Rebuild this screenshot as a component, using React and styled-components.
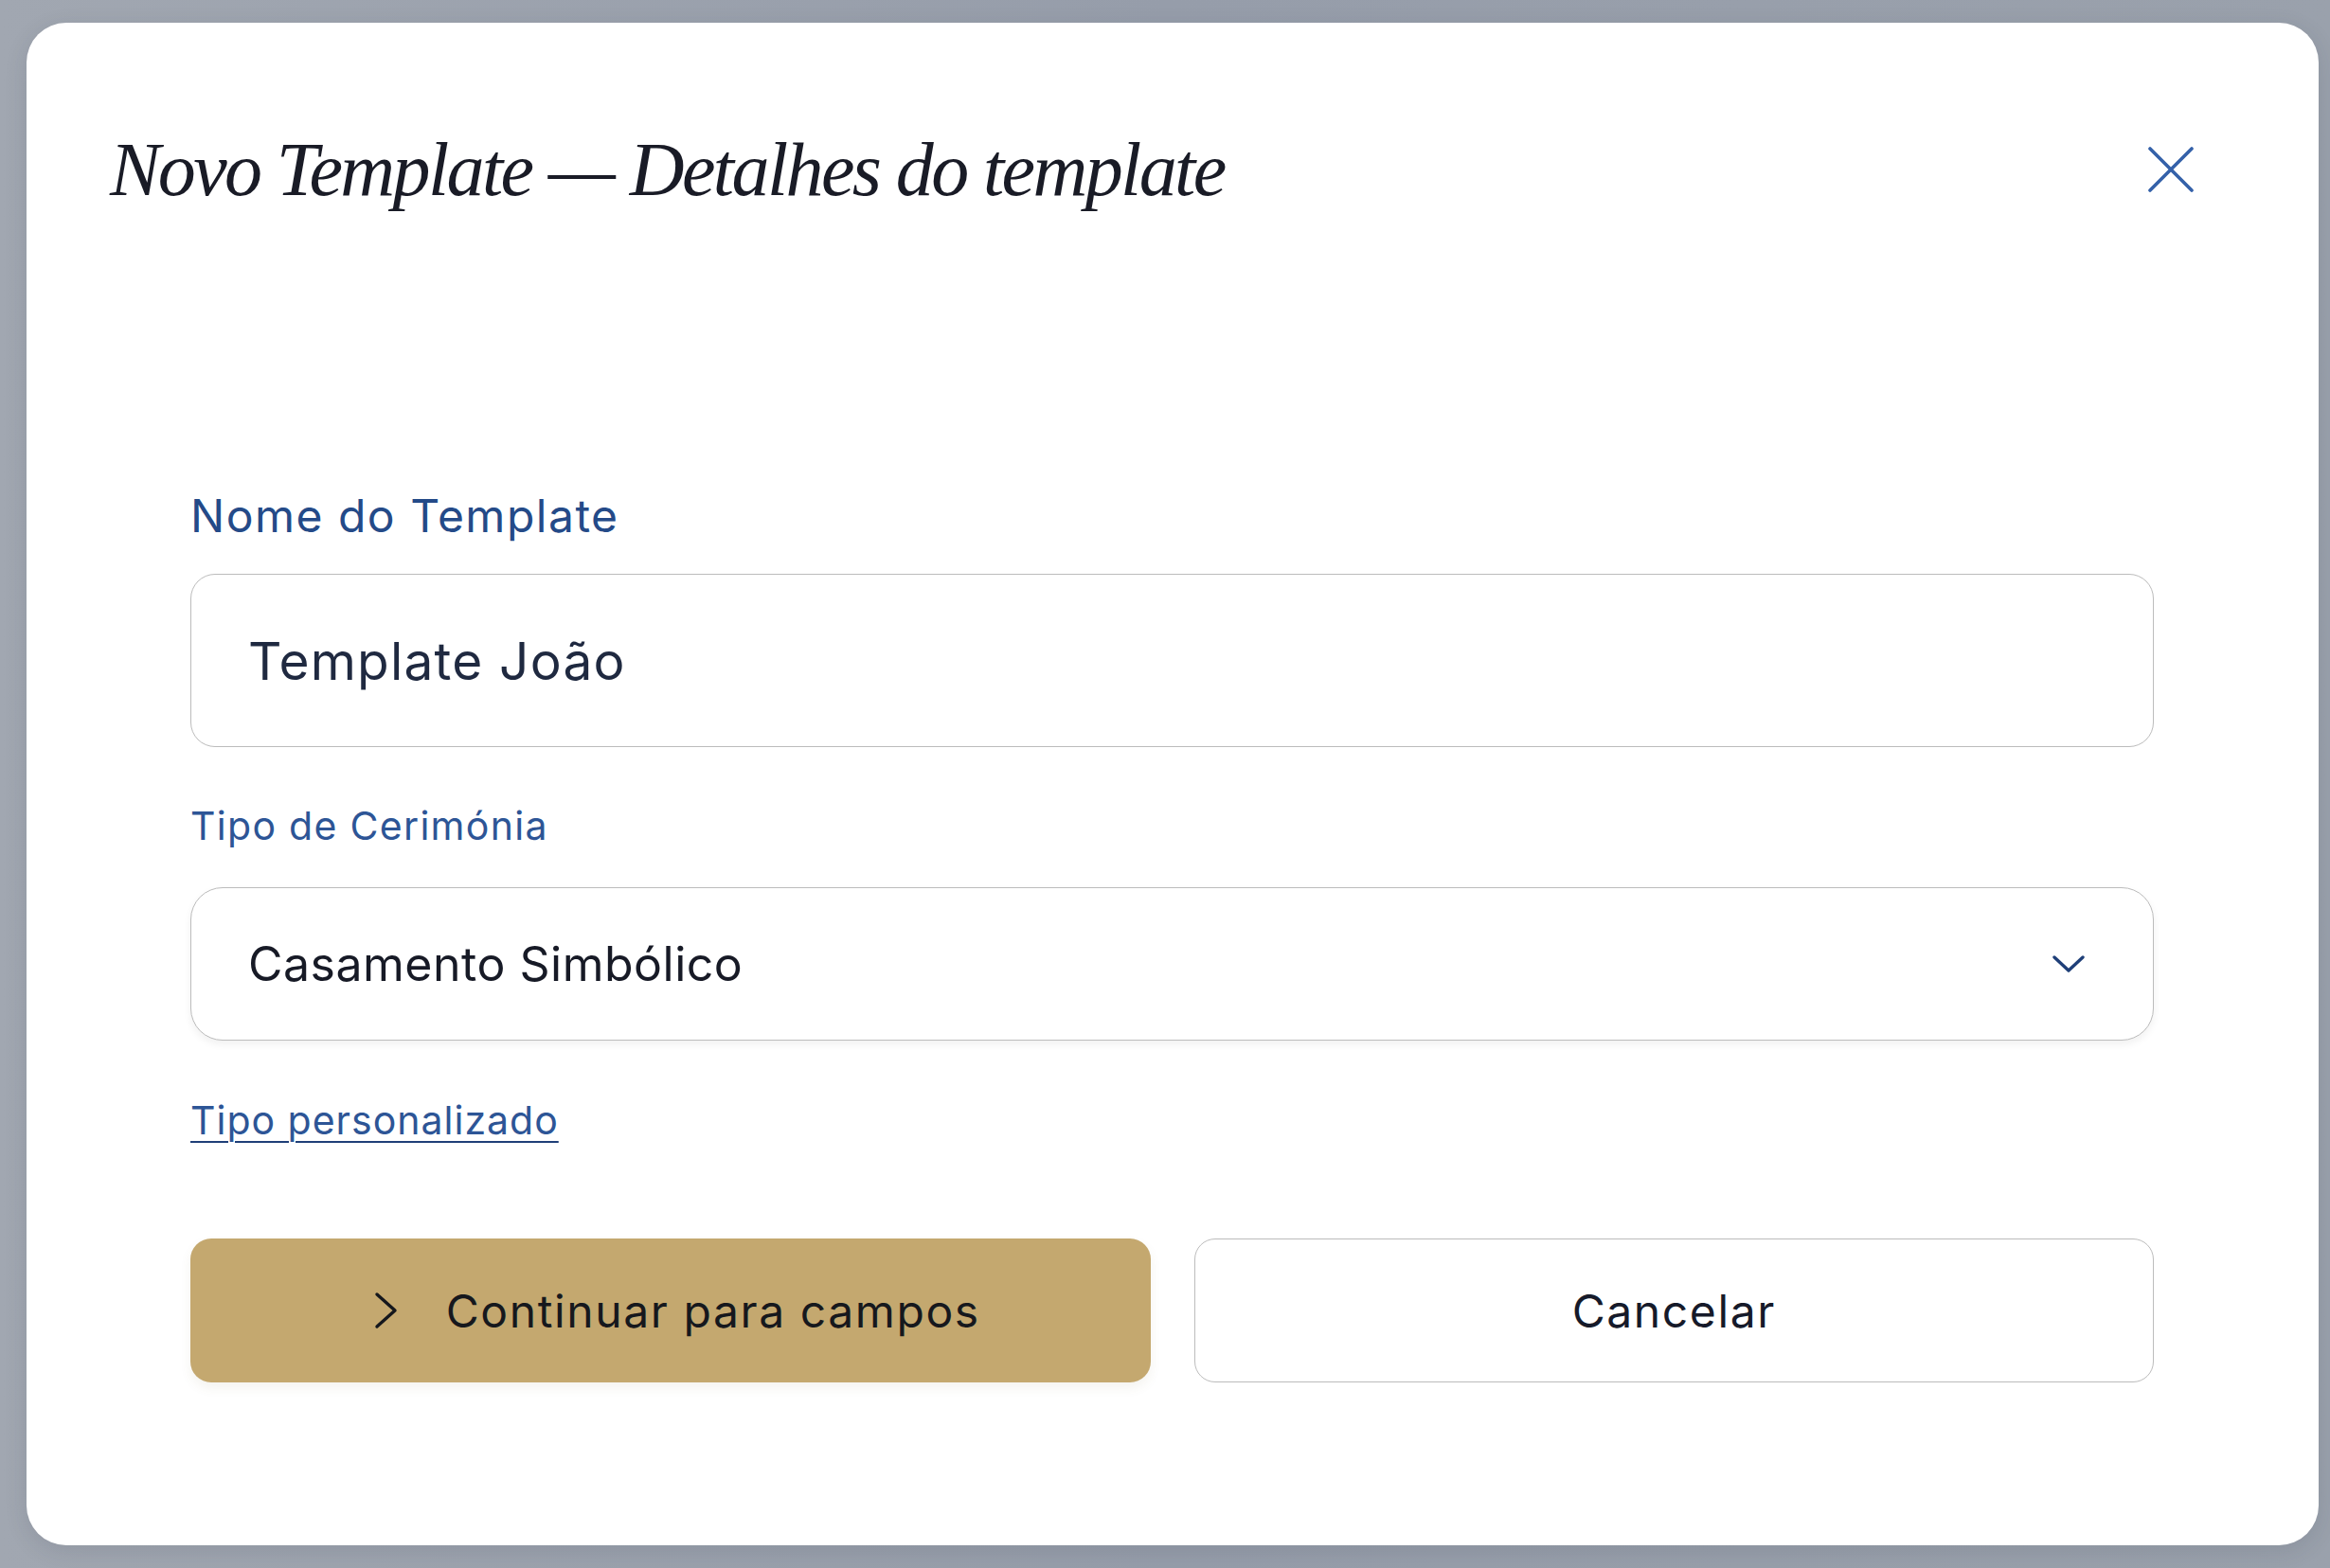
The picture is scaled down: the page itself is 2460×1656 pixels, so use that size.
import React from "react";
import styled, { createGlobalStyle } from "styled-components";

const GlobalStyle = createGlobalStyle`
  html, body {
    margin: 0;
    padding: 0;
    background: #9aa1ac;
  }
  * {
    box-sizing: border-box;
  }
`;

function App() {
  return (
    <>
      <GlobalStyle />
      <Page>
        <Modal>
          <Header>
            <Title>Novo Template — Detalhes do template</Title>
            <CloseButton aria-label="Fechar">
              <svg width="48" height="48" viewBox="0 0 48 48">
                <path
                  d="M2 2 L46 46 M46 2 L2 46"
                  stroke="#3461a9"
                  strokeWidth="3.6"
                  strokeLinecap="round"
                  fill="none"
                />
              </svg>
            </CloseButton>
          </Header>

          <Form>
            <Label>Nome do Template</Label>
            <TextInput defaultValue="Template João" />

            <Label small>Tipo de Cerimónia</Label>
            <Select>
              <SelectValue>Casamento Simbólico</SelectValue>
              <svg width="34" height="20" viewBox="0 0 34 20">
                <path
                  d="M2 3 L17 17 L32 3"
                  stroke="#1f3f78"
                  strokeWidth="3.4"
                  strokeLinecap="round"
                  strokeLinejoin="round"
                  fill="none"
                />
              </svg>
            </Select>

            <CustomLink href="#">Tipo personalizado</CustomLink>

            <Actions>
              <PrimaryButton>
                <svg width="26" height="40" viewBox="0 0 26 40">
                  <path
                    d="M3 3 L22 20 L3 37"
                    stroke="#15171c"
                    strokeWidth="3.4"
                    strokeLinecap="round"
                    strokeLinejoin="round"
                    fill="none"
                  />
                </svg>
                Continuar para campos
              </PrimaryButton>
              <SecondaryButton>Cancelar</SecondaryButton>
            </Actions>
          </Form>
        </Modal>
      </Page>
    </>
  );
}

const Page = styled.div`
  height: 1656px;
  padding: 24px 12px 24px 28px;
  display: flex;
  background: linear-gradient(90deg, #a1a7b1 0%, #969daa 50%, #9aa1ac 100%);
`;

const Modal = styled.div`
  flex: 1;
  background: #ffffff;
  border-radius: 42px;
  padding-top: 115px;
  display: flex;
  flex-direction: column;
  box-shadow: 0 6px 24px rgba(30, 40, 60, 0.12);
`;

const Header = styled.div`
  display: flex;
  align-items: center;
  justify-content: space-between;
  padding: 0 132px 0 88px;
  height: 80px;
`;

const Title = styled.h1`
  margin: 0;
  font-family: "Liberation Serif", "DejaVu Serif", serif;
  font-style: italic;
  font-weight: 400;
  font-size: 80px;
  line-height: 80px;
  letter-spacing: -2.6px;
  color: #191b26;
  white-space: nowrap;
`;

const CloseButton = styled.button`
  border: none;
  background: none;
  padding: 0;
  width: 48px;
  height: 48px;
  display: flex;
  cursor: pointer;
`;

const Form = styled.div`
  display: flex;
  flex-direction: column;
  margin-top: 302px;
  padding: 0 174px 0 173px;
  font-family: Inter, "Liberation Sans", sans-serif;
`;

const Label = styled.label`
  font-size: ${(props) => (props.small ? "41px" : "48px")};
  line-height: ${(props) => (props.small ? "41px" : "48px")};
  letter-spacing: ${(props) => (props.small ? "1.3px" : "1.5px")};
  margin-top: ${(props) => (props.small ? "63px" : "0")};
  margin-bottom: ${(props) => (props.small ? "44px" : "37px")};
  color: ${(props) => (props.small ? "#2d5596" : "#244a88")};
  font-weight: 400;
`;

const TextInput = styled.input`
  height: 183px;
  width: 100%;
  border: 1.5px solid #bcbcbc;
  border-radius: 26px;
  padding: 0 0 0 60px;
  font-family: Inter, "Liberation Sans", sans-serif;
  font-size: 55px;
  letter-spacing: 1.2px;
  color: #1f2940;
  background: #fff;
  outline: none;
`;

const Select = styled.div`
  height: 162px;
  border: 1.5px solid #bcbcbc;
  border-radius: 34px;
  padding: 0 72px 0 60px;
  display: flex;
  align-items: center;
  justify-content: space-between;
  box-shadow: 0 4px 8px rgba(0, 0, 0, 0.06);
  background: #fff;
`;

const SelectValue = styled.span`
  font-size: 50px;
  letter-spacing: 0.5px;
  color: #171a26;
`;

const CustomLink = styled.a`
  align-self: flex-start;
  margin-top: 64px;
  font-size: 41px;
  line-height: 41px;
  letter-spacing: 1px;
  color: #2d5596;
  text-decoration: underline;
  text-decoration-thickness: 2px;
  text-underline-offset: 7px;
  text-decoration-color: #1f3f78;
`;

const Actions = styled.div`
  display: grid;
  grid-template-columns: 1fr 1fr;
  gap: 46px;
  margin-top: 104px;
`;

const BaseButton = styled.button`
  height: 152px;
  border-radius: 22px;
  font-family: Inter, "Liberation Sans", sans-serif;
  font-size: 48px;
  letter-spacing: 1.6px;
  display: flex;
  align-items: center;
  justify-content: center;
  cursor: pointer;
`;

const PrimaryButton = styled(BaseButton)`
  background: #c4a86f;
  border: none;
  color: #16181d;
  gap: 50px;
  padding-left: 20px;
  box-shadow: 0 6px 12px rgba(120, 100, 50, 0.08);
`;

const SecondaryButton = styled(BaseButton)`
  background: #fff;
  border: 1.5px solid #bcbcbc;
  color: #161a2a;
`;

export default App;
